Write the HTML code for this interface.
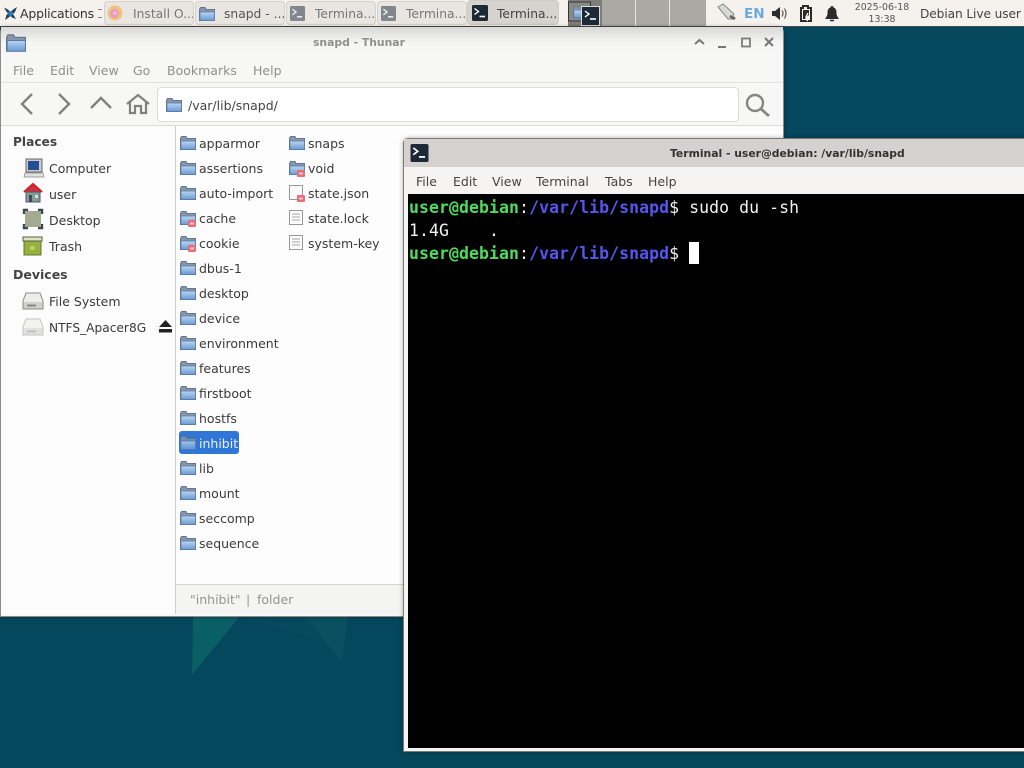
<!DOCTYPE html>
<html><head><meta charset="utf-8"><title>snapd - Thunar</title>
<style>
*{box-sizing:border-box}
html,body{margin:0;padding:0;width:1024px;height:768px;overflow:hidden;background:#05475c}
body{position:relative;font-family:"DejaVu Sans","Liberation Sans",sans-serif;font-size:12.5px;color:#3a3a3a}
.a{position:absolute;white-space:nowrap}
svg{position:absolute;overflow:visible}
.t{position:absolute;white-space:nowrap;line-height:18px;height:18px}
.tab{position:absolute;top:1px;height:24px;width:90px;background:#e9e6e2;border:1px solid #d5d2ce;border-radius:4px;color:#777;line-height:25px;white-space:nowrap;overflow:hidden;font-size:12.3px}
.tab span{position:absolute;top:0}
.menu{position:absolute;line-height:18px;white-space:nowrap}
.mono{font-family:"DejaVu Sans Mono","Liberation Mono",monospace;font-size:16.5px;letter-spacing:.07px;position:absolute;left:409px;line-height:23px;white-space:pre;color:#f2f2f2}
.g{color:#4fdc5e;font-weight:bold}.b{color:#5656ee;font-weight:bold}
</style></head><body>
<svg width="0" height="0" style="position:absolute"><defs>
<linearGradient id="fg" x1="0" y1="0" x2="0" y2="1"><stop offset="0" stop-color="#bcd5f0"/><stop offset="1" stop-color="#6a9ad4"/></linearGradient>
<symbol id="folder" viewBox="0 0 16 16"><path d="M.5 3.500V14.500H15.500V3.500H7L6 1.500H1.500Z" fill="#8796aa" stroke="#66768c"/><path d="M1 6H15.500V14.500H1Z" fill="url(#fg)" stroke="#557aa8" stroke-width=".7"/></symbol>
<symbol id="bad" viewBox="0 0 8 7"><rect width="8" height="7" rx="1" fill="#e67070"/><rect x="2" y="2.500" width="4" height="2" fill="#fbe"/></symbol>
<symbol id="term" viewBox="0 0 16 16"><rect width="16" height="16" rx="1.500" fill="#1c2a38"/><path d="M2.500 3.500L6.500 6.500L2.500 9.500" fill="none" stroke="#fff" stroke-width="1.400"/><path d="M7.500 11.500H13" stroke="#fff" stroke-width="1.600"/></symbol>
</defs></svg>

<!-- wallpaper fragments -->
<svg style="left:0;top:0" width="1024" height="768"><polygon points="240,616 305,616 348,650" fill="#064a5e"/><polygon points="193,616 240,616 192,675" fill="#0a5f67"/><polygon points="305,616 348,616 342,662" fill="#0a5060"/></svg>

<!-- panel -->
<div class="a" style="left:0;top:0;width:1024px;height:27px;background:#f5f2ee;border-bottom:1px solid #4a4a48"></div>
<svg style="left:3px;top:6px" width="15" height="15" viewBox="0 0 15 15"><path d="M1 1.500L5 3.500L7.500 6L10 3.500L14 1L12 6L10 8L13 13L9 11.500L7.500 10L5 12L2 14L3.500 9L5 7.500L3 5Z" fill="#20415f"/><circle cx="7.500" cy="7.500" r="2.400" fill="#2f7fb4"/></svg>
<div class="t" style="left:20px;top:5px;color:#333;font-size:12.500px;letter-spacing:-.2px">Applications</div>
<div class="a" style="left:98px;top:9px;width:4px;height:9px;border-top:1px solid #888;border-bottom:1px solid #888"></div>

<div class="tab" style="left:104px;width:90px"><span style="left:28px">Install O...</span></div>
<svg style="left:107px;top:5px" width="16" height="16" viewBox="0 0 16 16"><circle cx="8" cy="8" r="7.500" fill="#f1c27d"/><circle cx="7.500" cy="8.500" r="4.500" fill="#e69ab8"/><circle cx="8" cy="8" r="2.400" fill="#eeb6c8"/></svg>
<div class="tab" style="left:195px;width:90px"><span style="left:28px;color:#555">snapd - ...</span></div>
<svg style="left:199px;top:6px" width="16" height="16"><use href="#folder"/></svg>
<div class="tab" style="left:286px;width:90px"><span style="left:28px">Termina...</span></div>
<svg style="left:290px;top:6px;opacity:.5" width="15" height="15"><use href="#term"/></svg>
<div class="tab" style="left:377px;width:90px"><span style="left:28px">Termina...</span></div>
<svg style="left:381px;top:6px;opacity:.5" width="15" height="15"><use href="#term"/></svg>
<div class="tab" style="left:467px;width:92px;background:#d6d3cf;border-color:#cfccc8;top:0;height:25px;line-height:26px"><span style="left:29px;color:#444">Termina...</span></div>
<svg style="left:472px;top:5px" width="16" height="16"><use href="#term"/></svg>

<!-- pager -->
<div class="a" style="left:568px;top:0;width:138px;height:26px;background:#aaa9a4"></div>
<div class="a" style="left:568px;top:0;width:34px;height:26px;background:#7e7e78"></div>
<div class="a" style="left:635px;top:0;width:1px;height:26px;background:#e8e8e4"></div>
<div class="a" style="left:669px;top:0;width:1px;height:26px;background:#e8e8e4"></div>
<svg style="left:568px;top:1px" width="34" height="25"><rect x=".5" y="1" width="22" height="19" fill="#8a8a85" stroke="#333"/><use href="#folder" x="5" y="4" width="14" height="14"/><rect x="13.500" y="5.500" width="18" height="19" fill="#1c2a38" stroke="#ddd"/><path d="M17 10L21 13L17 16" fill="none" stroke="#fff" stroke-width="1.400"/><path d="M22 18H28" stroke="#fff" stroke-width="1.600"/></svg>

<!-- tray -->
<svg style="left:716px;top:2px" width="22" height="21" viewBox="0 0 22 21"><path d="M2 5L7 2L18 12L16 17L12 17Z" fill="#d8d8d4" stroke="#888"/><path d="M14 14L19 17" stroke="#666" stroke-width="3"/></svg>
<div class="t" style="left:744px;top:5px;color:#6ba9dc;font-weight:bold;font-size:13.500px">EN</div>
<svg style="left:771px;top:6px" width="18" height="15" viewBox="0 0 18 15"><path d="M1 5H4L9 1V14L4 10H1Z" fill="#2b2b2b"/><path d="M11 4.500Q13 7.500 11 10.500M13.500 2.500Q16.500 7.500 13.500 12.500" fill="none" stroke="#555" stroke-width="1.200"/></svg>
<svg style="left:799px;top:5px" width="15" height="17" viewBox="0 0 15 17"><path d="M4 1H9V3H12V16H2V3H4Z" fill="none" stroke="#2b2b2b" stroke-width="2"/><path d="M4 5H10V10L6 14H4Z" fill="#2b2b2b"/><path d="M9 8L7 12H10L8 16" stroke="#f5f2ee" stroke-width="1.400" fill="none"/></svg>
<svg style="left:825px;top:6px" width="14" height="16" viewBox="0 0 14 16"><path d="M7 0C8 0 8.500 .7 8.500 1.500C11 2.300 11.500 4.500 11.500 7C11.500 9.500 12.500 11 13.500 12V13H.5V12C1.500 11 2.500 9.500 2.500 7C2.500 4.500 3 2.300 5.500 1.500C5.500 .7 6 0 7 0Z" fill="#2b2b2b"/><path d="M5 14.500H9" stroke="#2b2b2b" stroke-width="1.500"/></svg>
<div class="a" style="left:845px;top:2px;width:74px;text-align:center;font-size:9.400px;line-height:12px;color:#555">2025-06-18<br>13:38</div>
<div class="t" style="left:920px;top:5px;font-size:12.200px;color:#444;letter-spacing:-.1px">Debian Live user</div>

<!-- Thunar window -->
<div class="a" style="left:0;top:27px;width:784px;height:590px;background:#f7f7f6;border:1px solid #8c8c8a;border-top:0;border-radius:5px 5px 0 0;box-shadow:0 0 4px rgba(0,0,0,.35)"></div>
<div class="a" style="left:1px;top:27px;width:782px;height:29px;background:linear-gradient(#d8d8d6,#f5f5f4 16px,#f7f7f6)"></div>
<svg style="left:6px;top:33px" width="20" height="20"><use href="#folder"/></svg>
<div class="t" style="left:313px;top:34px;font-size:10.800px;font-weight:bold;color:#8f8f8f">snapd - Thunar</div>
<svg style="left:692px;top:36px" width="86" height="14" fill="none" stroke="#777" stroke-width="2"><path d="M3 8L7.500 4L12 8"/><path d="M26 11H34"/><path d="M50 2.500H58V10.500H50Z" stroke-width="1.700"/><path d="M73 2L81 10M81 2L73 10"/></svg>
<div class="menu" style="left:13px;top:62px;color:#8f8f8f">File</div>
<div class="menu" style="left:50px;top:62px;color:#8f8f8f">Edit</div>
<div class="menu" style="left:89px;top:62px;color:#8f8f8f">View</div>
<div class="menu" style="left:133px;top:62px;color:#8f8f8f">Go</div>
<div class="menu" style="left:167px;top:62px;color:#8f8f8f">Bookmarks</div>
<div class="menu" style="left:253px;top:62px;color:#8f8f8f">Help</div>
<div class="a" style="left:1px;top:82px;width:782px;height:1px;background:#e2e2e0"></div>
<svg style="left:18px;top:91px" width="140" height="26" fill="none" stroke="#808080" stroke-width="2.400"><path d="M14 3L4 13L14 23"/><path d="M41 3L51 13L41 23"/><path d="M73 17L83 7L93 17"/><path d="M109 13L120 4L131 13M112 11V22H117V15H123V22H128V11" stroke-width="2.200"/></svg>
<div class="a" style="left:157px;top:87px;width:582px;height:35px;background:#fff;border:1px solid #dcdcda;border-radius:4px"></div>
<svg style="left:166px;top:97px" width="16" height="16"><use href="#folder"/></svg>
<div class="t" style="left:188px;top:97px;color:#444">/var/lib/snapd/</div>
<svg style="left:744px;top:92px" width="28" height="26" fill="none" stroke="#868686" stroke-width="2.400"><circle cx="11" cy="11" r="8"/><path d="M17 17L25 24" stroke-width="2.800"/></svg>
<div class="a" style="left:1px;top:125px;width:782px;height:1px;background:#dcdcda"></div>

<!-- sidebar -->
<div class="a" style="left:1px;top:126px;width:174px;height:488px;background:#fcfcfc"></div>
<div class="a" style="left:175px;top:126px;width:1px;height:488px;background:#cfcfcd"></div>
<div class="a" style="left:176px;top:126px;width:607px;height:458px;background:#fdfdfd"></div>
<div class="t" style="left:13px;top:133px;font-weight:bold;color:#444;font-size:12.200px">Places</div>
<svg style="left:24px;top:158px" width="20" height="20" viewBox="0 0 20 20"><rect x="2" y="1" width="16" height="13" fill="#ccc" stroke="#666"/><rect x="4" y="3" width="11" height="9" fill="#234f96"/><path d="M1 15H19L20 19H0Z" fill="#e2e2e0" stroke="#888" stroke-width=".7"/></svg>
<div class="t" style="left:49px;top:160px">Computer</div>
<svg style="left:23px;top:183px" width="20" height="20" viewBox="0 0 20 20"><path d="M1 9L10 1L19 9" fill="#cf3040" stroke="#c22" stroke-width="2"/><rect x="3" y="9" width="14" height="10" fill="#7f9f90" stroke="#556"/><rect x="6" y="12" width="3" height="7" fill="#446"/><rect x="12" y="12" width="3" height="3" fill="#dde"/></svg>
<div class="t" style="left:49px;top:186px">user</div>
<svg style="left:23px;top:209px" width="20" height="20" viewBox="0 0 20 20"><rect x="2" y="2" width="16" height="16" rx="3" fill="#a4aa90"/><path d="M1 5V1H5M15 1H19V5M19 15V19H15M5 19H1V15" fill="none" stroke="#3e4650" stroke-width="2.400"/></svg>
<div class="t" style="left:49px;top:212px">Desktop</div>
<svg style="left:22px;top:236px" width="21" height="20" viewBox="0 0 21 20"><rect x="2" y="4" width="17" height="15" fill="#97b03e" stroke="#667a28"/><rect x="1" y="1" width="19" height="4" fill="#e0e4c4" stroke="#5d5d40"/><path d="M8 10H13V14H8Z" fill="#b9cd6f"/></svg>
<div class="t" style="left:49px;top:238px">Trash</div>
<div class="t" style="left:13px;top:266px;font-weight:bold;color:#444">Devices</div>
<svg style="left:22px;top:292px" width="22" height="18" viewBox="0 0 22 18"><path d="M4 1H18L21 9V17H1V9Z" fill="#ededeb" stroke="#8a8a88"/><rect x="1.500" y="10" width="19" height="6.500" fill="#d0d0ce"/><rect x="5" y="12.500" width="9" height="2" fill="#888"/></svg>
<div class="t" style="left:49px;top:293px">File System</div>
<svg style="left:22px;top:318px;opacity:.6" width="22" height="18" viewBox="0 0 22 18"><path d="M4 1H18L21 9V17H1V9Z" fill="#ededeb" stroke="#a0a0a0"/><rect x="1.500" y="10" width="19" height="6.500" fill="#d0d0ce"/><rect x="5" y="12.500" width="9" height="2" fill="#999"/></svg>
<div class="t" style="left:49px;top:319px;font-size:12.200px">NTFS_Apacer8G</div>
<svg style="left:159px;top:320px" width="13" height="13" viewBox="0 0 13 13"><path d="M6.500 0L13 7H0Z" fill="#222"/><rect y="9" width="13" height="3.500" fill="#222"/></svg>

<!-- file list icons -->
<svg style="left:0;top:0" width="400" height="560">
<use href="#folder" x="180" y="135" width="16" height="16"/>
<use href="#folder" x="180" y="160" width="16" height="16"/>
<use href="#folder" x="180" y="185" width="16" height="16"/>
<use href="#folder" x="180" y="210" width="16" height="16"/><use href="#bad" x="188" y="220" width="8" height="7"/>
<use href="#folder" x="180" y="235" width="16" height="16"/><use href="#bad" x="188" y="245" width="8" height="7"/>
<use href="#folder" x="180" y="260" width="16" height="16"/>
<use href="#folder" x="180" y="285" width="16" height="16"/>
<use href="#folder" x="180" y="310" width="16" height="16"/>
<use href="#folder" x="180" y="335" width="16" height="16"/>
<use href="#folder" x="180" y="360" width="16" height="16"/>
<use href="#folder" x="180" y="385" width="16" height="16"/>
<use href="#folder" x="180" y="410" width="16" height="16"/>
</svg>
<div class="a" style="left:179px;top:431px;width:60px;height:23px;background:#2f76d6;border-radius:3px"></div>
<svg style="left:0;top:0" width="400" height="560">
<use href="#folder" x="180" y="435" width="16" height="16" opacity=".8"/>
<use href="#folder" x="180" y="460" width="16" height="16"/>
<use href="#folder" x="180" y="485" width="16" height="16"/>
<use href="#folder" x="180" y="510" width="16" height="16"/>
<use href="#folder" x="180" y="535" width="16" height="16"/>
<use href="#folder" x="289" y="135" width="16" height="16"/>
<use href="#folder" x="289" y="160" width="16" height="16"/><use href="#bad" x="297" y="170" width="8" height="7"/>
<g fill="#fafafa" stroke="#999"><path d="M289.500 185.500H302.500V199.500H289.500Z"/><path d="M289.500 210.500H302.500V224.500H289.500Z"/><path d="M289.500 235.500H302.500V249.500H289.500Z"/></g>
<path d="M292 214H300M292 217H300M292 220H300M292 239H300M292 242H300M292 245H300" stroke="#aaa"/>
<use href="#bad" x="297" y="195" width="8" height="7"/>
</svg>
<div class="t" style="left:199px;top:135px">apparmor</div>
<div class="t" style="left:199px;top:160px">assertions</div>
<div class="t" style="left:199px;top:185px">auto-import</div>
<div class="t" style="left:199px;top:210px">cache</div>
<div class="t" style="left:199px;top:235px">cookie</div>
<div class="t" style="left:199px;top:260px">dbus-1</div>
<div class="t" style="left:199px;top:285px">desktop</div>
<div class="t" style="left:199px;top:310px">device</div>
<div class="t" style="left:199px;top:335px">environment</div>
<div class="t" style="left:199px;top:360px">features</div>
<div class="t" style="left:199px;top:385px">firstboot</div>
<div class="t" style="left:199px;top:410px">hostfs</div>
<div class="t" style="left:199px;top:435px;color:#e8f0fb">inhibit</div>
<div class="t" style="left:199px;top:460px">lib</div>
<div class="t" style="left:199px;top:485px">mount</div>
<div class="t" style="left:199px;top:510px">seccomp</div>
<div class="t" style="left:199px;top:535px">sequence</div>
<div class="t" style="left:308px;top:135px">snaps</div>
<div class="t" style="left:308px;top:160px">void</div>
<div class="t" style="left:308px;top:185px">state.json</div>
<div class="t" style="left:308px;top:210px">state.lock</div>
<div class="t" style="left:308px;top:235px">system-key</div>
<div class="a" style="left:176px;top:584px;width:607px;height:1px;background:#d4d4d2"></div>
<div class="a" style="left:176px;top:585px;width:607px;height:29px;background:#f4f4f3"></div>
<div class="t" style="left:190px;top:591px;color:#949494">"inhibit"</div>
<div class="t" style="left:246px;top:591px;color:#949494">|</div>
<div class="t" style="left:257px;top:591px;color:#949494">folder</div>

<!-- Terminal window -->
<div class="a" style="left:403px;top:138px;width:630px;height:614px;background:#f6f4f2;border:1px solid #7a7a78;border-radius:5px 0 0 0;box-shadow:0 0 5px rgba(0,0,0,.3)"></div>
<div class="a" style="left:404px;top:139px;width:620px;height:28px;background:#d4d1ce"></div>
<svg style="left:410px;top:144px" width="19" height="18"><use href="#term"/></svg>
<div class="t" style="left:670px;top:145px;font-size:10.800px;font-weight:bold;color:#333">Terminal - user@debian: /var/lib/snapd</div>
<div class="menu" style="left:416px;top:173px;color:#444">File</div>
<div class="menu" style="left:453px;top:173px;color:#444">Edit</div>
<div class="menu" style="left:492px;top:173px;color:#444">View</div>
<div class="menu" style="left:536px;top:173px;color:#444">Terminal</div>
<div class="menu" style="left:605px;top:173px;color:#444">Tabs</div>
<div class="menu" style="left:648px;top:173px;color:#444">Help</div>
<div class="a" style="left:408px;top:194px;width:616px;height:554px;background:#000"></div>
<div class="mono" style="top:196px"><span class="g">user@debian</span>:<span class="b">/var/lib/snapd</span>$ sudo du -sh</div>
<div class="mono" style="top:219px">1.4G    .</div>
<div class="mono" style="top:242px"><span class="g">user@debian</span>:<span class="b">/var/lib/snapd</span>$ </div>
<div class="a" style="left:689px;top:242px;width:10px;height:22px;background:#fff"></div>
</body></html>
